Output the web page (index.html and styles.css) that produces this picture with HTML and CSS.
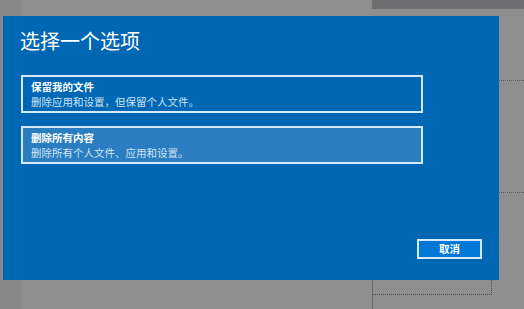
FILE: index.html
```html
<!DOCTYPE html>
<html lang="zh-CN">
<head>
<meta charset="utf-8">
<title>选择一个选项</title>
<link rel="stylesheet" href="styles.css">
</head>
<body>
<div class="desk">
  <div class="strip-left"></div>
  <div class="bar-top"></div>
  <div class="vline"></div>
  <div class="dot-h dot-a"></div>
  <div class="dot-h dot-b"></div>
  <div class="dot-box"></div>

  <div class="dialog">
    <h1 class="title">选择一个选项</h1>
    <div class="options">
      <div class="option">
        <div class="opt-head">保留我的文件</div>
        <div class="opt-desc">删除应用和设置，但保留个人文件。</div>
      </div>
      <div class="option option-hover">
        <div class="opt-head">删除所有内容</div>
        <div class="opt-desc">删除所有个人文件、应用和设置。</div>
      </div>
    </div>
    <div class="footer">
      <button class="btn">取消</button>
    </div>
  </div>
</div>
</body>
</html>
```

FILE: styles.css
```css
html, body {
  margin: 0;
  padding: 0;
}
body {
  background: #8e8e8e;
  font-family: "Noto Sans CJK SC", "Noto Sans", sans-serif;
  width: 524px;
  height: 309px;
  overflow: hidden;
}
.desk {
  position: relative;
  width: 524px;
  height: 309px;
  background: #8e8e8e;
}
.strip-left {
  position: absolute;
  left: 0;
  top: 0;
  width: 21px;
  height: 309px;
  background: #888888;
}
.bar-top {
  position: absolute;
  left: 372px;
  top: 0;
  width: 152px;
  height: 9px;
  background: #6e6e71;
}
.vline {
  position: absolute;
  left: 372px;
  top: 270px;
  width: 1px;
  height: 39px;
  background: #6a6a6a;
}
.dot-h {
  position: absolute;
  left: 495px;
  width: 29px;
  height: 0;
  border-top: 1px dotted #5a5a5a;
}
.dot-a { top: 80px; }
.dot-b { top: 192px; }
.dot-box {
  position: absolute;
  left: 373px;
  top: 270px;
  width: 118px;
  height: 24px;
  border-right: 1px dotted #4f4f4f;
  border-bottom: 1px dotted #4f4f4f;
}
.dialog {
  position: absolute;
  left: 3px;
  top: 16px;
  width: 496px;
  height: 264px;
  box-sizing: border-box;
  background: #0067b4;
  padding: 12px 17px 21px 17px;
  display: flex;
  flex-direction: column;
}
.title {
  margin: 0 0 21px 0;
  font-size: 20px;
  line-height: 26px;
  font-weight: 400;
  color: #ffffff;
}
.options {
  display: flex;
  flex-direction: column;
  gap: 13px;
  margin-left: 1px;
}
.option {
  width: 402px;
  height: 38px;
  box-sizing: border-box;
  border: 2px solid #d6e9f8;
  padding: 2px 8px;
  font-size: 10.5px;
  line-height: 15px;
}
.option-hover {
  background: #2a7dc0;
}
.opt-head {
  font-weight: 700;
  color: #ffffff;
}
.opt-desc {
  color: #cfe3f5;
}
.footer {
  margin-top: auto;
  display: flex;
  justify-content: flex-end;
}
.btn {
  width: 65px;
  height: 20px;
  box-sizing: border-box;
  border: 2px solid #d6e9f8;
  background: #0078d7;
  color: #ffffff;
  font-family: "Noto Sans CJK SC", "Noto Sans", sans-serif;
  font-size: 10.5px;
  font-weight: 700;
  line-height: 14px;
  padding: 0;
  margin: 0;
}
```
